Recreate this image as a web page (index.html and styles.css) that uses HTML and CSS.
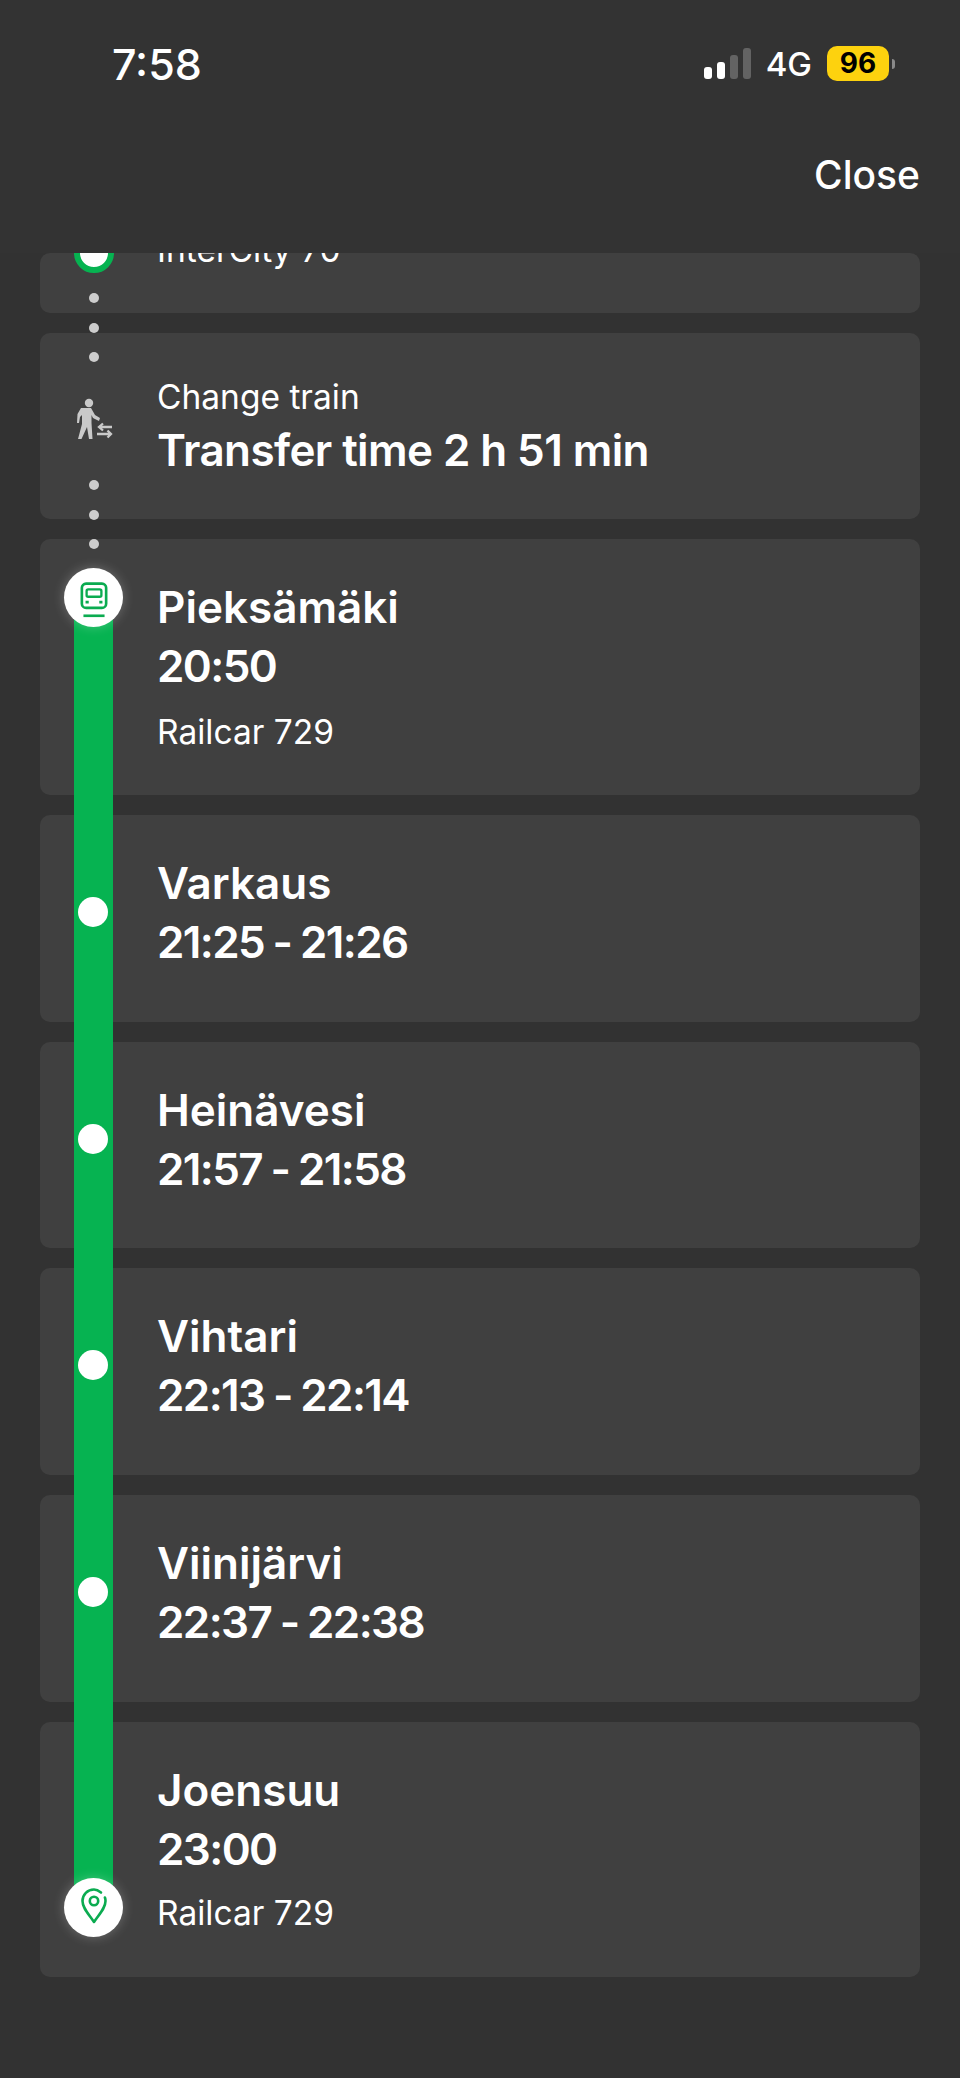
FILE: index.html
```html
<!DOCTYPE html>
<html lang="en">
<head>
  <meta charset="UTF-8">
  <meta name="viewport" content="width=device-width, initial-scale=1.0">
  <title>Train stops</title>
  <link rel="stylesheet" href="styles.css">
</head>
<body>
  <header class="header">
    <div class="status">
      <span class="time">7:58</span>
      <div class="status-right">
        <div class="signal">
          <i class="bar bar-1"></i>
          <i class="bar bar-2"></i>
          <i class="bar bar-3"></i>
          <i class="bar bar-4"></i>
        </div>
        <span class="network">4G</span>
        <span class="battery">96</span>
        <i class="battery-nub"></i>
      </div>
    </div>
    <div class="nav"><span class="close">Close</span></div>
  </header>

  <main class="list">
    <div class="line"></div>

    <section class="card card-cut">
      <div class="small cut-text">InterCity 70</div>
    </section>

    <section class="card card-transfer">
      <svg class="walk-icon" viewBox="0 0 44 46" aria-hidden="true">
        <circle cx="17" cy="9" r="4.200" fill="#c9c9c9"/>
        <path d="M9 14h10l4 7 5 3-1 3-6-3-1.500-3v8l1 16h-3.500l-2-12-5.500 12H6l4-15v-9l-2 2-1 6H5l.5-9z" fill="#c9c9c9"/>
        <path d="M40 33H27M31 29.500 27 33l4 3.500M25 40h14M35.500 36.500 39 40l-3.500 3.500" fill="none" stroke="#c9c9c9" stroke-width="2.300"/>
      </svg>
      <div class="small">Change train</div>
      <div class="big tight">Transfer time 2 h 51 min</div>
    </section>

    <section class="card card-meta">
      <div class="marker">
        <svg class="train-icon" viewBox="0 0 30 36" aria-hidden="true">
          <rect x="3.500" y="1.500" width="23" height="23" rx="4" fill="none" stroke="#0bab50" stroke-width="2.500"/>
          <rect x="8" y="7" width="14" height="7" rx="1.500" fill="none" stroke="#0bab50" stroke-width="2.200"/>
          <path d="M7 19h3M20 19h3" stroke="#0bab50" stroke-width="2.500"/>
          <path d="M5 32h20" stroke="#0bab50" stroke-width="2.500"/>
        </svg>
      </div>
      <div class="big">Pieksämäki</div>
      <div class="big when">20:50</div>
      <div class="small meta">Railcar 729</div>
    </section>

    <section class="card">
      <i class="stop-dot"></i>
      <div class="big">Varkaus</div>
      <div class="big when">21:25 - 21:26</div>
    </section>

    <section class="card">
      <i class="stop-dot"></i>
      <div class="big">Heinävesi</div>
      <div class="big when">21:57 - 21:58</div>
    </section>

    <section class="card">
      <i class="stop-dot"></i>
      <div class="big">Vihtari</div>
      <div class="big when">22:13 - 22:14</div>
    </section>

    <section class="card">
      <i class="stop-dot"></i>
      <div class="big">Viinijärvi</div>
      <div class="big when">22:37 - 22:38</div>
    </section>

    <section class="card card-meta card-last">
      <div class="marker marker-end">
        <svg class="pin-icon" viewBox="0 0 26 36" aria-hidden="true">
          <path d="M20 4.500C17.500 2.500 15.500 1.500 13 1.500 6.500 1.500 1.500 6.500 1.500 13c0 7 6 13 11.500 21 5.500-8 11.500-14 11.500-21 0-1.500-.2-2.500-.6-3.500" fill="none" stroke="#0bab50" stroke-width="2.600" stroke-linecap="round" stroke-linejoin="round"/>
          <circle cx="13" cy="13" r="4.200" fill="none" stroke="#0bab50" stroke-width="2.600"/>
        </svg>
      </div>
      <div class="big">Joensuu</div>
      <div class="big when">23:00</div>
      <div class="small meta">Railcar 729</div>
    </section>

    <!-- dots between the two trains -->
    <i class="ring"></i>
    <div class="dots dots-top"><i></i><i></i><i></i></div>
    <div class="dots dots-bottom"><i></i><i></i><i></i></div>
  </main>
</body>
</html>
```

FILE: styles.css
```css
* {
    box-sizing: border-box;
}

body {
    margin: 0;
    width: 960px;
    height: 2078px;
    overflow: hidden;
    background-color: #323232;
    color: #fff;
    font-family: Inter, "Liberation Sans", sans-serif;
}

/* Header */

.header {
    height: 253px;
    background-color: #333;
}

.status {
    height: 127px;
    padding: 0 65px 0 112px;
    display: flex;
    justify-content: space-between;
    align-items: center;
}

.time {
    font-size: 43px;
    font-weight: 500;
}

.status-right {
    display: flex;
    align-items: center;
}

.signal {
    display: flex;
    align-items: flex-end;
    gap: 5px;
    height: 31px;
}

.bar {
    width: 8px;
    border-radius: 3px;
    background-color: #fff;
}

.bar-1 { height: 12px; }
.bar-2 { height: 17px; }
.bar-3 { height: 24px; background-color: #636363; }
.bar-4 { height: 31px; background-color: #636363; }

.network {
    margin-left: 15px;
    font-size: 33px;
    font-weight: 500;
}

.battery {
    width: 62px;
    height: 35px;
    margin-left: 15px;
    border-radius: 10px;
    background-color: #fdd20e;
    color: #000;
    font-size: 28px;
    font-weight: 700;
    line-height: 35px;
    text-align: center;
}

.battery-nub {
    width: 3px;
    height: 10px;
    margin-left: 3px;
    border-radius: 0 3px 3px 0;
    background-color: #8a8a8a;
}

.nav {
    height: 126px;
    padding-right: 40px;
    text-align: right;
}

.close {
    font-size: 39px;
    font-weight: 500;
    line-height: 95px;
}

/* Stop list */

.list {
    position: relative;
    height: 1825px;
    padding: 0 40px;
    overflow: hidden;
}

.card {
    position: relative;
    height: 206.700px;
    margin-bottom: 20px;
    padding: 39px 40px 0 117px;
    border-radius: 10px;
    background-color: #404040;
}

.card-cut {
    height: 60px;
    padding-top: 0;
    overflow: hidden;
}

.cut-text {
    margin-top: -23px;
}

.card-transfer {
    height: 186px;
    padding-top: 44px;
}

.card-transfer .big {
    margin-top: 4px;
}

.card-meta {
    height: 256px;
}

.card-last {
    height: 255px;
}

.card-last .meta {
    margin-top: 14px;
}

.big {
    font-size: 44px;
    font-weight: 600;
    line-height: 59px;
}

.tight {
    letter-spacing: -0.6px;
}

.when {
    letter-spacing: -1.600px;
    word-spacing: -1px;
}

.small {
    font-size: 33.500px;
    line-height: 40px;
}

.meta {
    margin-top: 16px;
}

/* Timeline on top of the cards */

.line {
    position: absolute;
    z-index: 1;
    top: 347px;
    left: 74px;
    width: 39px;
    height: 1300px;
    background-color: #06b351;
}

.marker {
    position: absolute;
    z-index: 2;
    top: 29px;
    left: 24px;
    width: 59px;
    height: 59px;
    border-radius: 50%;
    background-color: #fff;
    box-shadow: 0 0 12px rgba(255, 255, 255, 0.25);
    display: flex;
    justify-content: center;
    align-items: center;
}

.marker-end {
    top: 156px;
}

.train-icon {
    width: 32px;
    height: 38px;
    margin-top: 6px;
}

.pin-icon {
    width: 26px;
    height: 36px;
    margin-top: -2px;
}

.stop-dot {
    position: absolute;
    z-index: 2;
    top: 82px;
    left: 38px;
    width: 30px;
    height: 30px;
    border-radius: 50%;
    background-color: #fff;
}

.walk-icon {
    position: absolute;
    top: 61px;
    left: 32px;
    width: 44px;
    height: 46px;
}

.ring {
    position: absolute;
    top: -20px;
    left: 74px;
    width: 40px;
    height: 40px;
    border: 6px solid #06b351;
    border-radius: 50%;
    background-color: #fff;
}

.dots {
    position: absolute;
    left: 89px;
    display: flex;
    flex-direction: column;
    gap: 19.500px;
}

.dots i {
    width: 10px;
    height: 10px;
    border-radius: 50%;
    background-color: #cdcdcd;
}

.dots-top {
    top: 40px;
}

.dots-bottom {
    top: 227px;
}
```
